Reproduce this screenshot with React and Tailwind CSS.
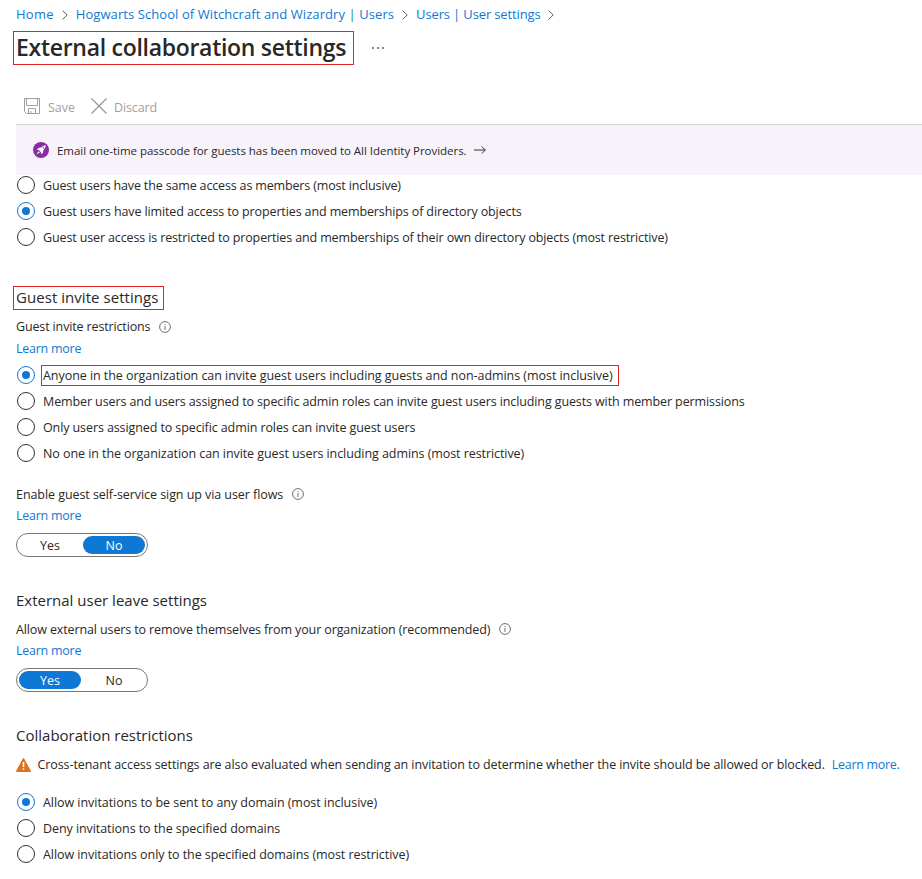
import { useState } from "react";

const Chevron = () => (
  <span className="flex mx-2">
    <svg className="w-[6px] h-[10px] shrink-0 mt-0.5" viewBox="0 0 6 10" fill="none" stroke="#605e5c">
      <path d="M0.6 0.6 L5.2 5 L0.6 9.4" />
    </svg>
  </span>
);

const SaveIcon = () => (
  <svg className="w-4 h-4 shrink-0" viewBox="0 0 16 16" fill="none" stroke="#a19f9d">
    <path d="M0.5 0.5 H15.5 V15.5 H2.5 L0.5 13.5 Z" />
    <path d="M2.5 0.5 V7.5 H13.5 V0.5" />
    <path d="M4.5 15.5 V10.5 H11.5 V15.5 M7 15.5 V13" />
  </svg>
);

const DiscardIcon = () => (
  <svg className="w-4 h-4 shrink-0" viewBox="0 0 16 16" fill="none" stroke="#979593" strokeWidth="1.2">
    <path d="M0.5 0.5 L15.5 15.5 M15.5 0.5 L0.5 15.5" />
  </svg>
);

const RocketIcon = () => (
  <svg className="w-4 h-4 shrink-0" viewBox="0 0 16 16">
    <circle cx="8" cy="8" r="8" fill="#8a2da5" />
    <path
      d="M12.8 3.2 C11 3.3 9.4 4.2 8 5.6 L5.6 5.9 L3.8 7.8 L5.8 8.1 L7.9 10.2 L8.2 12.2 L10.1 10.4 L10.4 8 C11.8 6.6 12.7 5 12.8 3.2 Z"
      fill="#fff"
    />
    <path d="M5.6 9.2 L6.8 10.4 L3.4 12.6 Z" fill="#fff" />
    <circle cx="10.3" cy="5.7" r="0.7" fill="#8a2da5" />
  </svg>
);

const ArrowIcon = () => (
  <svg className="w-3 h-2 shrink-0" viewBox="0 0 12 8" fill="none" stroke="#323130">
    <path d="M0 4 H11.3 M7.8 0.5 L11.3 4 L7.8 7.5" />
  </svg>
);

const InfoIcon = () => (
  <svg className="w-3 h-3 shrink-0" viewBox="0 0 12 12" fill="none" stroke="#605e5c">
    <circle cx="6" cy="6" r="5.4" strokeWidth="0.9" />
    <path d="M6 5 V9 M6 3 V4" strokeWidth="0.9" />
  </svg>
);

const WarningIcon = () => (
  <svg className="w-[15px] h-[14px] shrink-0 mt-px" viewBox="0 0 15 14">
    <path
      d="M7.5 0.8 L14.2 13.2 H0.8 Z"
      fill="#db7220"
      stroke="#db7220"
      strokeWidth="1.4"
      strokeLinejoin="round"
    />
    <path d="M7.5 4 V9 M7.5 10.2 V11.8" stroke="#fff" strokeWidth="1.6" />
  </svg>
);

const RadioGroup = ({ options, initial, className = "" }) => {
  const [selected, setSelected] = useState(initial);

  return (
    <div role="radiogroup" className={`flex flex-col gap-1.5 ${className}`}>
      {options.map((option, i) => (
        <div
          key={option.text}
          role="radio"
          aria-checked={selected === i}
          onClick={() => setSelected(i)}
          className="flex items-center h-5 pl-px cursor-pointer"
        >
          <span
            className={`w-[18px] h-[18px] rounded-full border flex items-center justify-center shrink-0 ${
              selected === i ? "border-[#0f78d4]" : "border-[#323130]"
            }`}
          >
            {selected === i && <span className="w-2 h-2 rounded-full bg-[#0f78d4]" />}
          </span>
          {option.marked ? (
            <span
              className={`ml-[6px] mt-px w-[578px] h-[21px] pl-px leading-[19px] border border-[#e3242b] whitespace-nowrap ${option.fit}`}
            >
              {option.text}
            </span>
          ) : (
            <span className={`ml-2 pt-0.5 whitespace-nowrap ${option.fit}`}>{option.text}</span>
          )}
        </div>
      ))}
    </div>
  );
};

const Toggle = ({ initial }) => {
  const [value, setValue] = useState(initial);

  return (
    <div className="flex items-center w-[132px] h-6 px-0.5 gap-0.5 border border-[#7a7876] rounded-full">
      {["Yes", "No"].map((label) => (
        <button
          key={label}
          type="button"
          onClick={() => setValue(label)}
          className={`w-[62px] h-[18px] leading-5 rounded-full text-center ${
            value === label ? "bg-[#0f78d4] text-white" : ""
          }`}
        >
          {label}
        </button>
      ))}
    </div>
  );
};

const Label = ({ children, fit = "pt-0.5" }) => (
  <div className="flex items-center gap-[9px] h-5">
    <span className={`whitespace-nowrap ${fit}`}>{children}</span>
    <InfoIcon />
  </div>
);

const LearnMore = () => (
  <a href="#" className="block w-fit h-5 leading-[22px] tracking-[-0.25px] text-[#0f78d4]">
    Learn more
  </a>
);

const accessOptions = [
  { text: "Guest users have the same access as members (most inclusive)", fit: "tracking-[-0.155px]" },
  {
    text: "Guest users have limited access to properties and memberships of directory objects",
    fit: "tracking-[-0.12px]",
  },
  {
    text: "Guest user access is restricted to properties and memberships of their own directory objects (most restrictive)",
    fit: "tracking-[-0.13px]",
  },
];

const inviteOptions = [
  {
    text: "Anyone in the organization can invite guest users including guests and non-admins (most inclusive)",
    fit: "tracking-[-0.05px]",
    marked: true,
  },
  {
    text: "Member users and users assigned to specific admin roles can invite guest users including guests with member permissions",
    fit: "tracking-[-0.11px]",
  },
  { text: "Only users assigned to specific admin roles can invite guest users", fit: "tracking-[-0.1px]" },
  {
    text: "No one in the organization can invite guest users including admins (most restrictive)",
    fit: "tracking-[-0.07px]",
  },
];

const domainOptions = [
  { text: "Allow invitations to be sent to any domain (most inclusive)", fit: "tracking-[-0.05px]" },
  { text: "Deny invitations to the specified domains", fit: "tracking-[-0.07px]" },
  { text: "Allow invitations only to the specified domains (most restrictive)", fit: "tracking-[-0.065px]" },
];

const App = () => {
  return (
    <div className="w-[922px] h-[879px] overflow-hidden bg-white pl-4 font-['Open_Sans',sans-serif] text-[12.5px] leading-5 text-[#292827]">
      {/* Breadcrumb */}
      <nav className="flex items-center h-5 mt-1 text-[13px] text-[#0f78d4] whitespace-nowrap">
        <a href="#" className="tracking-[0.25px]">Home</a>
        <Chevron />
        <a href="#" className="tracking-[0.08px]">Hogwarts School of Witchcraft and Wizardry | Users</a>
        <Chevron />
        <a href="#" className="tracking-[-0.14px]">Users | User settings</a>
        <Chevron />
      </nav>

      {/* Title */}
      <div className="flex items-center mt-[7px]">
        <h1 className="-ml-[3px] w-[341px] h-[34px] pl-0.5 border border-[#e3242b] text-[23px] leading-[31px] tracking-[-0.29px] font-semibold whitespace-nowrap">
          External collaboration settings
        </h1>
        <span className="flex gap-[3px] ml-[18px]">
          <i className="w-0.5 h-0.5 bg-[#8a8886]" />
          <i className="w-0.5 h-0.5 bg-[#8a8886]" />
          <i className="w-0.5 h-0.5 bg-[#8a8886]" />
        </span>
      </div>

      {/* Toolbar */}
      <div className="flex items-center h-[37px] mt-[23px] pl-2 border-b border-[#d2d0ce] text-[#a19f9d]">
        <SaveIcon />
        <span className="ml-2 pt-[3px]">Save</span>
        <span className="ml-4 flex"><DiscardIcon /></span>
        <span className="ml-[7px] pt-[3px] tracking-[-0.15px]">Discard</span>
      </div>

      {/* Banner */}
      <div className="flex items-center h-[50px] pl-[17px] bg-[#f8f3fb] text-[11.5px] whitespace-nowrap">
        <RocketIcon />
        <span className="ml-2 mr-[7px] pt-0.5 tracking-[-0.035px]">
          Email one-time passcode for guests has been moved to All Identity Providers.
        </span>
        <ArrowIcon />
      </div>

      <RadioGroup options={accessOptions} initial={1} />

      {/* Guest invite settings */}
      <h2 className="-ml-[3px] mt-[39px] w-[151px] h-6 pl-0.5 border border-[#e3242b] text-[15px] leading-[21px] tracking-[0.05px] whitespace-nowrap">
        Guest invite settings
      </h2>
      <div className="mt-[7px]">
        <Label fit="tracking-[-0.14px]">Guest invite restrictions</Label>
      </div>
      <div className="mt-px">
        <LearnMore />
      </div>
      <RadioGroup className="mt-[7px]" options={inviteOptions} initial={0} />

      <div className="mt-[21px]">
        <Label fit="pt-0.5 tracking-[-0.065px]">Enable guest self-service sign up via user flows</Label>
      </div>
      <div className="mt-px mb-2">
        <LearnMore />
      </div>
      <Toggle initial="No" />

      {/* External user leave settings */}
      <h2 className="mt-[31px] h-6 text-[15px] leading-6">External user leave settings</h2>
      <div className="mt-[7px]">
        <Label fit="pt-0.5 tracking-[-0.12px]">
          Allow external users to remove themselves from your organization (recommended)
        </Label>
      </div>
      <div className="mt-px mb-2">
        <LearnMore />
      </div>
      <Toggle initial="Yes" />

      {/* Collaboration restrictions */}
      <h2 className="mt-[31px] h-6 text-[15px] leading-6">Collaboration restrictions</h2>
      <div className="flex items-center h-5 mt-[7px] whitespace-nowrap">
        <WarningIcon />
        <span className="ml-[6.5px] pt-0.5 tracking-[-0.088px]">
          Cross-tenant access settings are also evaluated when sending an invitation to determine whether the invite should be allowed or blocked.
        </span>
        <a href="#" className="ml-[7px] pt-0.5 tracking-[-0.3px] text-[#0f78d4]">Learn more.</a>
      </div>
      <RadioGroup className="mt-[18px]" options={domainOptions} initial={0} />
    </div>
  );
};

export default App;
